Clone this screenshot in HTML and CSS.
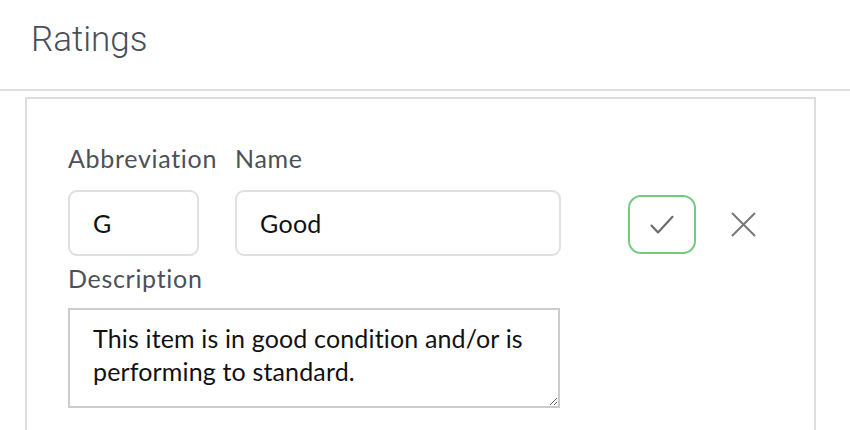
FILE: index.html
```html
<!DOCTYPE html>
<html>
<head>
<meta charset="utf-8">
<link rel="stylesheet" href="styles.css">
</head>
<body>
<header class="page-header">
  <h1 class="page-title">Ratings</h1>
</header>
<section class="card">
  <div class="row">
    <div class="field field-abbr">
      <label class="label">Abbreviation</label>
      <input class="input input-abbr" type="text" value="G">
    </div>
    <div class="field field-name">
      <label class="label">Name</label>
      <input class="input input-name" type="text" value="Good">
    </div>
    <div class="actions">
      <button class="btn-save" type="button" aria-label="Save">
        <svg width="24" height="24" viewBox="0 0 24 24"><path d="M1.5 12.5 L8 19.5 L22.5 3.8" fill="none" stroke="#6b6b6b" stroke-width="2.1" stroke-linecap="round" stroke-linejoin="round"/></svg>
      </button>
      <button class="btn-cancel" type="button" aria-label="Cancel">
        <svg width="25" height="25" viewBox="0 0 25 25"><path d="M1 1 L24 24 M24 1 L1 24" fill="none" stroke="#777" stroke-width="2"/></svg>
      </button>
    </div>
  </div>
  <div class="field field-desc">
    <label class="label">Description</label>
    <textarea class="textarea">This item is in good condition and/or is performing to standard.</textarea>
  </div>
</section>
</body>
</html>
```

FILE: styles.css
```css
* { box-sizing: border-box; }
html, body { margin: 0; padding: 0; background: #fff; }
body { font-family: Lato, "Noto Sans", sans-serif; height: 430px; overflow: hidden; }

.page-header {
  height: 91px;
  border-bottom: 2px solid #dedede;
  padding: 20px 0 0 31px;
}
.page-title {
  margin: 0;
  font-family: Roboto, "Liberation Sans", sans-serif;
  font-weight: 300;
  font-size: 35px;
  line-height: 40px;
  color: #4a4f57;
}

.card {
  margin: 6px 34px 0 25px;
  border: 2px solid #dddddd;
  border-bottom: none;
  height: 340px;
  padding: 44px 0 0 41px;
}

.row { display: flex; align-items: flex-start; }
.field { display: flex; flex-direction: column; }
.field-abbr { width: 167px; }
.field-name { width: 326px; }

.label {
  font-size: 25px;
  line-height: 30px;
  letter-spacing: 0.7px;
  color: #4c5158;
  margin-bottom: 17px;
}

.input {
  height: 66px;
  border: 2px solid #e0e0e0;
  border-radius: 9px;
  padding: 0 0 0 23px;
  font-family: Lato, "Noto Sans", sans-serif;
  font-size: 25px;
  letter-spacing: 0.3px;
  color: #111;
  background: #fff;
  outline: none;
}
.input-abbr { width: 131px; }
.input-name { width: 326px; }

.actions {
  display: flex;
  align-items: center;
  margin: 52px 0 0 67px;
}
.btn-save {
  width: 68px;
  height: 59px;
  border: 2px solid #72cc7e;
  border-radius: 13px;
  background: #fff;
  display: flex;
  align-items: center;
  justify-content: center;
  padding: 0;
}
.btn-cancel {
  margin-left: 35px;
  width: 25px;
  height: 25px;
  border: none;
  background: none;
  padding: 0;
  display: flex;
}

.field-desc { margin-top: 7px; }
.field-desc .label { margin-bottom: 15px; }
.textarea {
  width: 492px;
  height: 100px;
  border: 2px solid #cccccc;
  border-radius: 0;
  padding: 12px 12px 0 23px;
  font-family: Lato, "Noto Sans", sans-serif;
  font-size: 25px;
  letter-spacing: 0.15px;
  line-height: 33px;
  color: #111;
  resize: both;
  outline: none;
}
```
